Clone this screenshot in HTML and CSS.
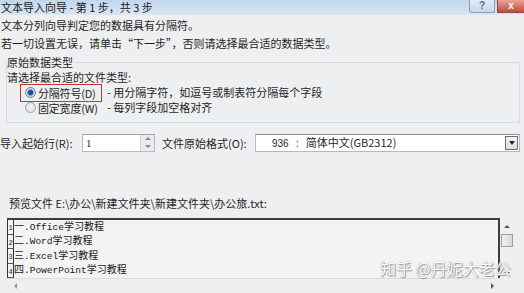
FILE: index.html
```html
<!DOCTYPE html>
<html lang="zh-CN">
<head>
<meta charset="utf-8">
<title>文本导入向导</title>
<link rel="stylesheet" href="styles.css">
</head>
<body>
<div class="window">
  <div class="titlebar">
    <span class="title">文本导入向导 - 第 1 步，共 3 步</span>
    <div class="tb-buttons">
      <span class="tb-btn help">?</span>
      <span class="tb-btn close">x</span>
    </div>
  </div>
  <div class="content">
    <p class="line first">文本分列向导判定您的数据具有分隔符。</p>
    <p class="line">若一切设置无误，请单击“下一步”，否则请选择最合适的数据类型。</p>
    <fieldset class="group">
      <legend class="group-label">原始数据类型</legend>
      <div class="prompt">请选择最合适的文件类型:</div>
      <div class="opt-row">
        <span class="opt hl"><span class="radio on"></span><span class="opt-text">分隔符号(D)</span></span>
        <span class="desc">- 用分隔字符，如逗号或制表符分隔每个字段</span>
      </div>
      <div class="opt-row">
        <span class="opt"><span class="radio"></span><span class="opt-text">固定宽度(W)</span></span>
        <span class="desc">- 每列字段加空格对齐</span>
      </div>
    </fieldset>
    <div class="import-row">
      <span class="field-label">导入起始行(R):</span>
      <span class="spin">
        <span class="spin-value">1</span>
        <span class="spin-btns"><span class="spin-up"></span><span class="spin-down"></span></span>
      </span>
      <span class="field-label origin">文件原始格式(O):</span>
      <span class="combo">
        <span class="combo-text"><span class="code">936</span><span class="sep">:</span>简体中文(GB2312)</span>
        <span class="combo-btn"><span class="combo-arrow"></span></span>
      </span>
    </div>
    <div class="preview-label">预览文件 E:\办公\新建文件夹\新建文件夹\办公旅.txt:</div>
    <div class="preview">
      <div class="pv-main">
        <div class="pv-lines">
          <div class="pv-row"><span class="num">1</span><span class="txt">一<span class="lat">.Office</span>学习教程</span></div>
          <div class="pv-row"><span class="num">2</span><span class="txt">二<span class="lat">.Word</span>学习教程</span></div>
          <div class="pv-row"><span class="num">3</span><span class="txt">三<span class="lat">.Excel</span>学习教程</span></div>
          <div class="pv-row"><span class="num">4</span><span class="txt">四<span class="lat">.PowerPoint</span>学习教程</span></div>
        </div>
        <div class="vscroll">
          <span class="varr up"></span>
          <span class="thumb"></span>
          <span class="vspace"></span>
          <span class="varr down"></span>
        </div>
      </div>
      <div class="hscroll">
        <span class="harr left"></span>
        <span class="harr right"></span>
      </div>
    </div>
  </div>
  <div class="watermark">知乎 @丹妮大老公</div>
</div>
</body>
</html>
```

FILE: styles.css
```css
* { box-sizing: border-box; }
html, body {
  margin: 0;
  padding: 0;
}
body {
  width: 524px;
  height: 293px;
  overflow: hidden;
  background: #eeeff0;
  font-family: "Noto Sans CJK SC", "Liberation Sans", sans-serif;
  font-size: 11px;
  color: #1f1f1f;
}
.window {
  position: relative;
  width: 524px;
  height: 293px;
  overflow: hidden;
}
.titlebar {
  height: 15px;
  display: flex;
  justify-content: space-between;
  align-items: flex-start;
  background: linear-gradient(#c3d6eb, #d9e6f3);
}
.title {
  padding-left: 1px;
  line-height: 14px;
  font-size: 11px;
  color: #1a1a1a;
}
.tb-buttons {
  display: flex;
  gap: 2px;
}
.tb-btn {
  height: 13px;
  display: flex;
  align-items: center;
  justify-content: center;
  font-family: "Liberation Sans", sans-serif;
  font-size: 10px;
  font-weight: bold;
  line-height: 1;
}
.help {
  width: 26px;
  border: 1px solid #8e9fb5;
  border-top: 0;
  border-radius: 0 0 0 3px;
  background: linear-gradient(#e3ebf5, #c9d7e8);
  color: #5a6d87;
}
.close {
  width: 27px;
  border: 1px solid #98463d;
  border-top: 0;
  border-right: 0;
  background: linear-gradient(#e7a497, #c8493d);
  color: #ffffff;
}
.content {
  padding: 0;
}
.line {
  margin: 0;
  line-height: 18px;
  padding-left: 1px;
  white-space: nowrap;
}
.line.first {
  margin-top: 1px;
}
.group {
  margin: 3px 4px 0 6px;
  padding: 0 0 7px 0;
  border: 1px solid #d3dce3;
  min-width: 0;
}
.group-label {
  padding: 0 1px 0 0;
  line-height: 14px;
}
.prompt {
  padding-top: 1px;
  line-height: 15px;
}
.opt-row {
  height: 15px;
  display: flex;
  align-items: center;
  padding-left: 15px;
  white-space: nowrap;
}
.opt {
  width: 78px;
  height: 14px;
  display: flex;
  align-items: center;
  padding-left: 3px;
  flex: none;
}
.opt.hl {
  outline: 1px solid #c8333a;
  outline-offset: 1px;
}
.radio {
  width: 11px;
  height: 11px;
  border-radius: 50%;
  border: 1px solid #9aa3ad;
  background: radial-gradient(circle, #f5f5f5 0, #d9dde2 100%);
  margin-right: 2px;
  flex: none;
}
.radio.on {
  border-color: #6f7e8f;
  background: radial-gradient(circle, #1b3f6e 0, #2c5f9e 2.5px, #c5d7ea 3.5px, #eef3f8 100%);
}
.opt-text {
  line-height: 14px;
  white-space: nowrap;
  letter-spacing: -0.2px;
}
.desc {
  margin-left: 7px;
  line-height: 15px;
}
.import-row {
  margin-top: 10px;
  height: 19px;
  display: flex;
  align-items: center;
  white-space: nowrap;
}
.field-label {
  width: 82px;
  flex: none;
}
.field-label.origin {
  width: 93px;
  margin-left: 7px;
}
.spin {
  width: 73px;
  height: 18px;
  display: flex;
  align-items: stretch;
  border: 1px solid #b5b9c0;
  border-top-color: #9ea3aa;
  background: #ffffff;
}
.spin-value {
  flex: 1;
  padding-left: 3px;
  line-height: 16px;
  font-family: "Liberation Serif", serif;
  font-size: 11px;
}
.spin-btns {
  width: 14px;
  display: flex;
  flex-direction: column;
  background: #e9ebee;
  border-left: 1px solid #d0d3d8;
}
.spin-up, .spin-down {
  flex: 1;
  display: flex;
  align-items: center;
  justify-content: center;
}
.spin-up::before {
  content: "";
  border-left: 3px solid transparent;
  border-right: 3px solid transparent;
  border-bottom: 3px solid #7d8694;
}
.spin-down::before {
  content: "";
  border-left: 3px solid transparent;
  border-right: 3px solid transparent;
  border-top: 3px solid #7d8694;
}
.combo {
  width: 265px;
  height: 18px;
  display: flex;
  align-items: center;
  border: 1px solid #b4b8bf;
  border-top-color: #8f949c;
  background: #ffffff;
}
.combo-text {
  flex: 1;
  padding-left: 16px;
  line-height: 16px;
}
.code {
  font-family: "Liberation Sans", sans-serif;
  font-size: 10px;
}
.sep {
  display: inline-block;
  width: 17px;
  text-align: center;
  color: #666;
}
.combo-btn {
  width: 13px;
  height: 14px;
  margin-right: 1px;
  display: flex;
  align-items: center;
  justify-content: center;
  border: 1px solid #6c7079;
  background: linear-gradient(#f4f4f4, #dcdcdc);
}
.combo-arrow {
  border-left: 3px solid transparent;
  border-right: 3px solid transparent;
  border-top: 4px solid #222;
}
.preview-label {
  margin-top: 44px;
  padding-left: 9px;
  line-height: 14px;
  white-space: nowrap;
}
.preview {
  margin: 8px 0 0 7px;
  width: 507px;
}
.pv-main {
  display: flex;
}
.pv-lines {
  width: 493px;
  border-top: 2px solid #3d3d3d;
  border-right: 2px solid #3d3d3d;
  background: #f3f3f3;
}
.pv-row {
  height: 14.5px;
  display: flex;
  align-items: flex-end;
}
.num {
  width: 7px;
  height: 14.5px;
  flex: none;
  border-left: 1px solid #333;
  border-right: 1px solid #333;
  border-bottom: 1px solid #555;
  font-family: "Liberation Mono", monospace;
  font-size: 7px;
  line-height: 12px;
  padding-top: 2px;
  text-align: center;
  color: #222;
}
.txt {
  padding-left: 0;
  line-height: 14px;
  font-size: 10px;
  color: #1a1a1a;
  white-space: nowrap;
}
.lat {
  font-family: "Liberation Mono", monospace;
  font-size: 9.5px;
}
.vscroll {
  width: 14px;
  display: flex;
  flex-direction: column;
  align-items: center;
  padding-top: 3px;
}
.varr {
  width: 12px;
  height: 10px;
  display: flex;
  align-items: center;
  justify-content: center;
}
.varr.up::before {
  content: "";
  border-left: 3px solid transparent;
  border-right: 3px solid transparent;
  border-bottom: 3px solid #555;
}
.varr.down::before {
  content: "";
  border-left: 3px solid transparent;
  border-right: 3px solid transparent;
  border-top: 3px solid #555;
}
.thumb {
  width: 12px;
  height: 13px;
  margin-top: 3px;
  border: 1px solid #9a9ea5;
  background: linear-gradient(90deg, #f2f2f2, #d6d8db);
}
.vspace {
  flex: 1;
}
.hscroll {
  width: 493px;
  height: 14px;
  display: flex;
  justify-content: space-between;
  align-items: center;
  padding: 0 6px 0 7px;
  border-top: 1px solid #dcdcdc;
}
.harr.left {
  border-top: 3px solid transparent;
  border-bottom: 3px solid transparent;
  border-right: 3px solid #9a9a9a;
}
.harr.right {
  border-top: 3px solid transparent;
  border-bottom: 3px solid transparent;
  border-left: 3px solid #555;
}
.watermark {
  position: absolute;
  left: 380px;
  top: 258px;
  font-size: 16px;
  line-height: 20px;
  color: #ffffff;
  text-shadow: 0 0 1px #777, 1px 1px 1px #999;
  white-space: nowrap;
}
```
